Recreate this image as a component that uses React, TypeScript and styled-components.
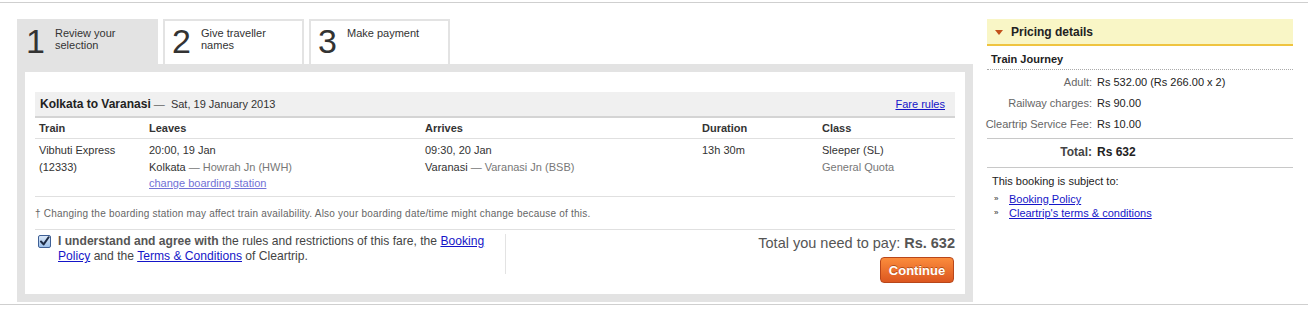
import React from "react";
import styled, { createGlobalStyle } from "styled-components";

const GlobalStyle = createGlobalStyle`
  body {
    margin: 0;
    font-family: "Liberation Sans", Arial, sans-serif;
    color: #333;
    background: #fff;
  }
`;

const Frame = styled.div`
  margin-top: 2px;
  height: 303px;
  border-top: 1px solid #cfcfcf;
  border-bottom: 1px solid #cfcfcf;
  box-sizing: border-box;
  padding: 16px 0 2px 17px;
  display: flex;
  gap: 14px;
`;

const Main = styled.div`
  width: 956px;
  display: flex;
  flex-direction: column;
`;

const Tabs = styled.div`
  display: flex;
  gap: 5px;
  height: 45px;
`;

const Tab = styled.div<{ $active?: boolean }>`
  width: 141px;
  box-sizing: border-box;
  display: flex;
  align-items: flex-start;
  gap: 9px;
  background: ${(p) => (p.$active ? "#e3e3e3" : "#fff")};
  border: ${(p) => (p.$active ? "none" : "2px solid #e3e3e3")};
  border-bottom: none;
  padding-top: ${(p) => (p.$active ? "5px" : "3px")};
  padding-left: ${(p) => (p.$active ? "9px" : "7px")};
`;

const TabNum = styled.span`
  font-size: 34px;
  line-height: 34px;
  color: #333;
  width: 20px;
`;

const TabLabel = styled.span`
  font-size: 11px;
  line-height: 12px;
  color: #333;
  padding-top: 3px;
`;

const GrayBox = styled.div`
  flex: 1;
  background: #e3e3e3;
  padding: 8px;
  display: flex;
`;

const Panel = styled.div`
  flex: 1;
  background: #fff;
  padding: 20px 10px 0 10px;
`;

const TripHead = styled.div`
  height: 24px;
  background: #f0f0f0;
  border-bottom: 2px solid #d4d4d4;
  display: flex;
  align-items: center;
  justify-content: space-between;
  padding: 0 10px 0 5px;
  font-size: 11px;
`;

const Route = styled.span`
  b {
    font-size: 12px;
    color: #222;
  }
  em {
    font-style: normal;
    color: #666;
  }
`;

const Link = styled.a<{ $pale?: boolean }>`
  color: ${(p) => (p.$pale ? "#7171d6" : "#1515c8")};
  text-decoration: underline;
  cursor: pointer;
`;

const Grid = styled.div`
  display: grid;
  grid-template-columns: 110px 276px 277px 120px 1fr;
  padding-left: 4px;
  font-size: 11px;
`;

const HeadRow = styled(Grid)`
  height: 20px;
  align-items: center;
  border-bottom: 1px solid #e0e0e0;
  font-weight: bold;
  color: #333;
`;

const DataRow = styled(Grid)`
  padding-top: 3px;
  height: 54px;
  border-bottom: 1px solid #e0e0e0;
  line-height: 16.5px;
  color: #333;
`;

const Muted = styled.span`
  color: #777;
`;

const Footnote = styled.div`
  height: 32px;
  display: flex;
  align-items: center;
  font-size: 10px;
  color: #666;
  border-bottom: 1px solid #e0e0e0;
  letter-spacing: 0.22px;
`;

const Agree = styled.div`
  display: flex;
  padding-top: 4px;
`;

const AgreeLeft = styled.div`
  width: 467px;
  display: flex;
  gap: 7px;
  padding-left: 3px;
  border-right: 1px solid #e3e3e3;
  height: 40px;
`;

const Check = styled.span`
  flex: none;
  width: 13px;
  height: 13px;
  margin-top: 1px;
  box-sizing: border-box;
  border: 1px solid #3e5f95;
  border-radius: 2px;
  background: linear-gradient(#dbe8f8, #9cc0ea);
  display: flex;
  align-items: center;
  justify-content: center;
`;

const AgreeText = styled.p`
  margin: 0;
  font-size: 12.1px;
  line-height: 15px;
  color: #444;
  b {
    color: #555;
  }
`;

const Pay = styled.div`
  flex: 1;
  display: flex;
  flex-direction: column;
  align-items: flex-end;
  gap: 5px;
`;

const Total = styled.div`
  font-size: 14.5px;
  color: #555;
  line-height: 18px;
  b {
    color: #555;
  }
`;

const Button = styled.button`
  width: 74px;
  height: 26px;
  border: 1px solid #b8461a;
  border-radius: 4px;
  background: linear-gradient(#fb8c3c, #dc5720);
  color: #fff;
  font-family: "Liberation Sans", Arial, sans-serif;
  font-weight: bold;
  font-size: 13px;
  text-shadow: 0 -1px 0 rgba(120, 40, 0, 0.5);
  padding: 0;
  margin-right: 1px;
`;

const Side = styled.div`
  width: 306px;
  font-size: 11px;
`;

const SideHead = styled.div`
  height: 24px;
  padding-top: 1px;
  box-sizing: content-box;
  background: #f9f6c6;
  border-bottom: 2px solid #efc440;
  display: flex;
  align-items: center;
  gap: 8px;
  padding-left: 8px;
  font-weight: bold;
  font-size: 12px;
  color: #222;
`;

const Tri = styled.span`
  width: 0;
  height: 0;
  border-left: 4px solid transparent;
  border-right: 4px solid transparent;
  border-top: 5px solid #c2511c;
`;

const Journey = styled.div`
  height: 23px;
  line-height: 27px;
  padding-left: 4px;
  font-weight: bold;
  font-size: 11px;
  color: #222;
  border-bottom: 1px dotted #aaa;
`;

const Prices = styled.div`
  display: grid;
  grid-template-columns: 105px 1fr;
  column-gap: 5px;
  padding: 2px 0 3px;
  border-bottom: 1px solid #c8c8c8;
`;

const PLabel = styled.span<{ $total?: boolean }>`
  justify-self: end;
  white-space: nowrap;
  color: ${(p) => (p.$total ? "#444" : "#666")};
  line-height: 21px;
  font-weight: ${(p) => (p.$total ? "bold" : "normal")};
  font-size: ${(p) => (p.$total ? "12px" : "11px")};
`;

const PValue = styled.span<{ $total?: boolean }>`
  color: #222;
  line-height: 21px;
  white-space: nowrap;
  font-weight: ${(p) => (p.$total ? "bold" : "normal")};
  font-size: ${(p) => (p.$total ? "12px" : "11px")};
`;

const TotalGrid = styled(Prices)`
  padding: 3px 0 4px;
`;

const Subject = styled.div`
  padding: 6px 0 0 5px;
  color: #222;
  line-height: 14px;
`;

const Bullets = styled.ul`
  list-style: none;
  margin: 4px 0 0;
  padding: 0;
  li {
    display: flex;
    gap: 7px;
    line-height: 14px;
  }
  li::before {
    content: "»";
    font-size: 8px;
    color: #222;
    width: 8px;
    padding-left: 2px;
  }
`;

const CheckMark = () => (
  <svg width="11" height="11" viewBox="0 0 11 11">
    <path d="M2 5.5 L4.6 8.4 L9.6 1.2" fill="none" stroke="#1d2b45" strokeWidth="2" strokeLinecap="round" strokeLinejoin="round" />
  </svg>
);

const steps = [
  { n: "1", label: ["Review your", "selection"], active: true },
  { n: "2", label: ["Give traveller", "names"] },
  { n: "3", label: ["Make payment"] },
];

const App = () => (
  <>
    <GlobalStyle />
    <Frame>
      <Main>
        <Tabs>
          {steps.map((s) => (
            <Tab key={s.n} $active={s.active}>
              <TabNum>{s.n}</TabNum>
              <TabLabel>
                {s.label.map((l) => (
                  <div key={l}>{l}</div>
                ))}
              </TabLabel>
            </Tab>
          ))}
        </Tabs>
        <GrayBox>
          <Panel>
            <TripHead>
              <Route>
                <b>Kolkata to Varanasi</b> <em>—</em>&nbsp; Sat, 19 January 2013
              </Route>
              <Link>Fare rules</Link>
            </TripHead>
            <HeadRow>
              <span>Train</span>
              <span>Leaves</span>
              <span>Arrives</span>
              <span>Duration</span>
              <span>Class</span>
            </HeadRow>
            <DataRow>
              <div>
                Vibhuti Express
                <br />
                (12333)
              </div>
              <div>
                20:00, 19 Jan
                <br />
                Kolkata <Muted>— Howrah Jn (HWH)</Muted>
                <br />
                <Link $pale>change boarding station</Link>
              </div>
              <div>
                09:30, 20 Jan
                <br />
                Varanasi <Muted>— Varanasi Jn (BSB)</Muted>
              </div>
              <div>13h 30m</div>
              <div>
                Sleeper (SL)
                <br />
                <Muted>General Quota</Muted>
              </div>
            </DataRow>
            <Footnote>
              † Changing the boarding station may affect train availability. Also your boarding date/time might change because of this.
            </Footnote>
            <Agree>
              <AgreeLeft>
                <Check>
                  <CheckMark />
                </Check>
                <AgreeText>
                  <b>I understand and agree with</b> the rules and restrictions of this fare, the <Link>Booking Policy</Link> and the{" "}
                  <Link>Terms &amp; Conditions</Link> of Cleartrip.
                </AgreeText>
              </AgreeLeft>
              <Pay>
                <Total>
                  Total you need to pay: <b>Rs. 632</b>
                </Total>
                <Button>Continue</Button>
              </Pay>
            </Agree>
          </Panel>
        </GrayBox>
      </Main>
      <Side>
        <SideHead>
          <Tri />
          Pricing details
        </SideHead>
        <Journey>Train Journey</Journey>
        <Prices>
          <PLabel>Adult:</PLabel>
          <PValue>Rs 532.00 (Rs 266.00 x 2)</PValue>
          <PLabel>Railway charges:</PLabel>
          <PValue>Rs 90.00</PValue>
          <PLabel>Cleartrip Service Fee:</PLabel>
          <PValue>Rs 10.00</PValue>
        </Prices>
        <TotalGrid>
          <PLabel $total>Total:</PLabel>
          <PValue $total>Rs 632</PValue>
        </TotalGrid>
        <Subject>
          This booking is subject to:
          <Bullets>
            <li>
              <Link>Booking Policy</Link>
            </li>
            <li>
              <Link>Cleartrip's terms &amp; conditions</Link>
            </li>
          </Bullets>
        </Subject>
      </Side>
    </Frame>
  </>
);

export default App;
